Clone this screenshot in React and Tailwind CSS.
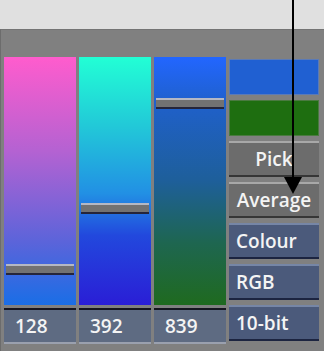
import React from 'react';

const font = { fontFamily: '"Open Sans", "DejaVu Sans", sans-serif' };

const bars = [
  {
    value: '128',
    handle: 207,
    gradient: 'bg-[linear-gradient(to_bottom,#ff5ccd_0%,#b462d2_38%,#5a64da_75%,#1a6ee6_100%)]',
  },
  {
    value: '392',
    handle: 146,
    gradient: 'bg-[linear-gradient(to_bottom,#22ffd5_0%,#22c8d8_28%,#2290e4_55%,#2248dd_72%,#2a1ed6_100%)]',
  },
  {
    value: '839',
    handle: 41,
    gradient: 'bg-[linear-gradient(to_bottom,#2266ff_0%,#1f60c8_20%,#1e5f9a_50%,#1e6650_75%,#1f6a1f_100%)]',
  },
];

const Bar = ({ value, handle, gradient }) => (
  <div className="flex flex-col gap-[3px] w-[72px]">
    <div className={`relative h-[248px] ${gradient}`}>
      <div
        className="absolute left-[2px] right-[2px] h-[11px] bg-[#727272] border-t-2 border-t-[#b4b8c4] border-b-2 border-b-[#25253a]"
        style={{ top: handle }}
      />
    </div>
    <div className="h-[36px] bg-[#5e6b82] border-t-2 border-t-[#15151f] border-b-2 border-b-[#9aa0ae] flex items-center pl-[11px] text-[19px] text-[#f4f4f4] font-semibold">
      {value}
    </div>
  </div>
);

const grayBtn =
  'h-[36px] bg-[#6c6c6c] border-t-2 border-t-[#a8a8a8] border-b-2 border-b-[#363636] flex items-center justify-center text-[19px] font-semibold text-[#f4f4f4]';
const blueBtn =
  'h-[36px] bg-[#4b5a7b] border-t-2 border-t-[#7686a6] border-b-2 border-b-[#1c2440] flex items-center pl-[7px] text-[19px] font-semibold text-[#f4f4f4]';

export default function App() {
  return (
    <div className="relative w-[324px] h-[351px] bg-[#e0e0e0] overflow-hidden" style={font}>
      <div className="h-[29px]" />
      <div className="h-[322px] bg-[#808080] border-l border-l-[#6c6c6c] border-t border-t-[#747474] flex gap-[3px] pt-[27px] pl-[3px]">
        {bars.map((b) => (
          <Bar key={b.value} {...b} />
        ))}
        <div className="w-[90px] flex flex-col gap-[5px] mt-[2px]">
          <div className="h-[36px] bg-[#2060d2] border border-[#5a7ab8]" />
          <div className="h-[36px] bg-[#1e6e10] border border-[#4a7a40]" />
          <div className={grayBtn}>Pick</div>
          <div className={grayBtn}>Average</div>
          <div className={blueBtn}>Colour</div>
          <div className={blueBtn}>RGB</div>
          <div className={blueBtn}>10-bit</div>
        </div>
      </div>
      <svg className="absolute left-0 top-0 pointer-events-none" width="324" height="351">
        <line x1="293" y1="0" x2="293" y2="180" stroke="#000" strokeWidth="2" />
        <polygon points="284,177 302,177 293,194" fill="#000" />
      </svg>
    </div>
  );
}
